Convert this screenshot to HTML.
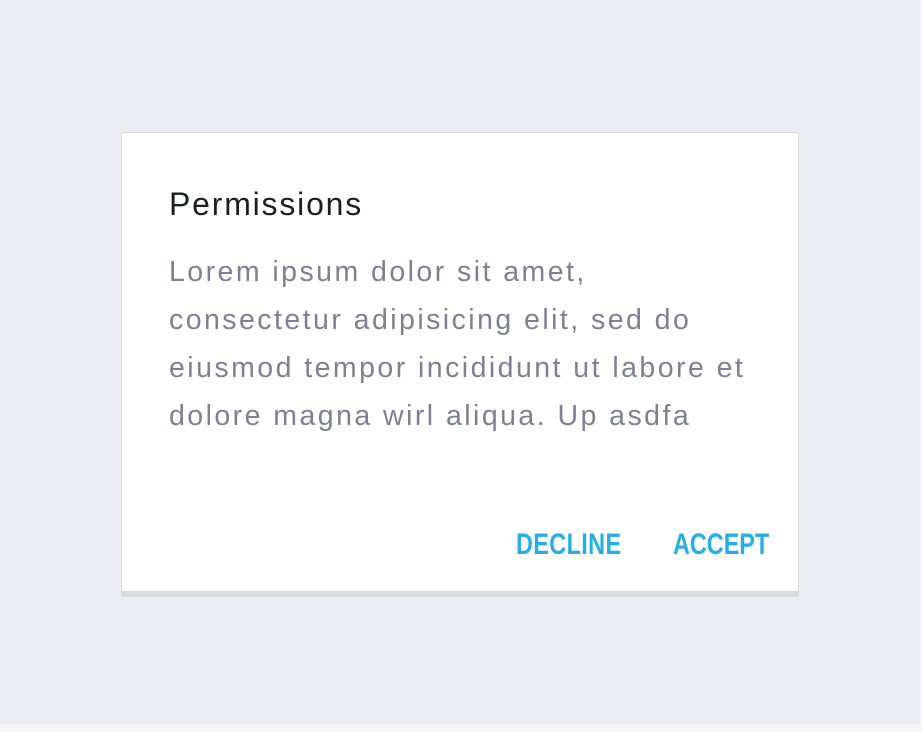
<!DOCTYPE html>
<html><head><style>
html,body{margin:0;padding:0}
body{width:922px;height:732px;background:#f5f5fa;position:relative;overflow:hidden;font-family:"Liberation Sans",sans-serif}
.bg{position:absolute;left:0;top:0;width:920px;height:724px;background:#ececf5}
.card{position:absolute;left:121px;top:132px;width:676px;height:458px;background:#fff;border:1px solid #d8d8e2;border-radius:3px;box-shadow:0 5px 0 #dadae4}
.t{position:absolute;left:47px;top:53px;font-size:32px;color:#1d1f22;letter-spacing:1.8px}
.b{position:absolute;left:47px;top:115px;width:640px;font-size:28.5px;line-height:48px;color:#7c8294;letter-spacing:2.45px;white-space:nowrap}
.btn{position:absolute;top:395px;font-weight:bold;font-size:30px;color:#27aee9;transform:scaleX(0.78);transform-origin:left top;letter-spacing:0.5px}
</style></head><body>
<div class="bg"></div>
<div class="card">
<div class="t">Permissions</div>
<div class="b">Lorem ipsum dolor sit amet,<br>consectetur adipisicing elit, sed do<br>eiusmod tempor incididunt ut labore et<br>dolore magna wirl aliqua. Up asdfa</div>
<div class="btn" style="left:394px">DECLINE</div>
<div class="btn" style="left:551px;letter-spacing:0">ACCEPT</div>
</div>
</body></html>
